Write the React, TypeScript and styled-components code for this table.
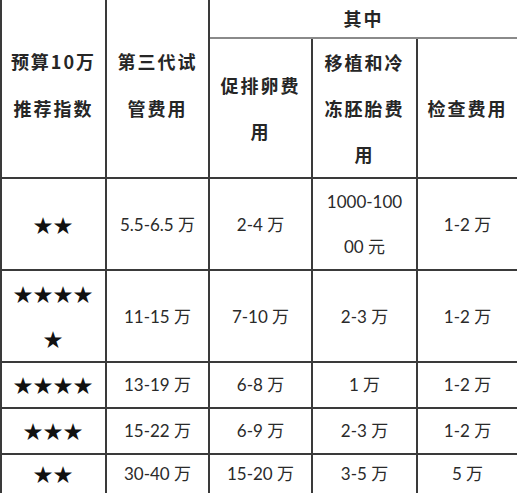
import * as React from "react";
import styled, { createGlobalStyle } from "styled-components";

interface CostRow {
  stars: string[];
  total: string[];
  ovulation: string[];
  transfer: string[];
  checkup: string[];
  lineHeight: number;
}

const rows: CostRow[] = [
  { stars: ["★★"], total: ["5.5-6.5 万"], ovulation: ["2-4 万"], transfer: ["1000-100", "00 元"], checkup: ["1-2 万"], lineHeight: 45 },
  { stars: ["★★★★", "★"], total: ["11-15 万"], ovulation: ["7-10 万"], transfer: ["2-3 万"], checkup: ["1-2 万"], lineHeight: 45 },
  { stars: ["★★★★"], total: ["13-19 万"], ovulation: ["6-8 万"], transfer: ["1 万"], checkup: ["1-2 万"], lineHeight: 44 },
  { stars: ["★★★"], total: ["15-22 万"], ovulation: ["6-9 万"], transfer: ["2-3 万"], checkup: ["1-2 万"], lineHeight: 44 },
  { stars: ["★★"], total: ["30-40 万"], ovulation: ["15-20 万"], transfer: ["3-5 万"], checkup: ["5 万"], lineHeight: 38 },
];

const GlobalStyle = createGlobalStyle`
  html, body {
    margin: 0;
    padding: 0;
    background: #ffffff;
  }
`;

const Sheet = styled.div`
  width: 530px;
  height: 500px;
  background: #ffffff;
  overflow: hidden;
`;

const Table = styled.table`
  border-collapse: collapse;
  table-layout: fixed;
  width: 516px;
  border-top: hidden;
  border-right: hidden;
  border-bottom: hidden;
  border-left: 2px solid #555555;
`;

const HeadCell = styled.th<{ $light?: boolean; $lift?: number }>`
  border: 2px solid ${p => (p.$light ? "#8a8a8a" : "#3a3a3a")};
  padding: 0 0 ${p => p.$lift ?? 0}px;
  text-align: center;
  vertical-align: middle;
  font-family: "Noto Sans CJK SC", sans-serif;
  font-size: 18px;
  font-weight: 700;
  letter-spacing: 2px;
  color: #262626;
`;

const Cell = styled.td`
  border: 2px solid #3a3a3a;
  padding: 0;
  text-align: center;
  vertical-align: middle;
  font-family: Lato, "Noto Sans CJK SC", sans-serif;
  font-size: 17px;
  color: #2a2a2a;
  white-space: nowrap;
`;

const Line = styled.div<{ $lh: number }>`
  height: ${p => p.$lh}px;
  line-height: ${p => p.$lh}px;
  overflow: hidden;
`;

const Stars = styled.div`
  font-family: "Noto Sans CJK SC", sans-serif;
  font-size: 19px;
  letter-spacing: 1px;
  color: #111111;
`;

const Lines: React.FC<{ lines: string[]; lh: number }> = ({ lines, lh }) => (
  <>
    {lines.map((l, i) => (
      <Line key={i} $lh={lh}>
        {l}
      </Line>
    ))}
  </>
);

export default function App() {
  return (
    <Sheet>
      <GlobalStyle />
      <Table>
        <colgroup>
          <col style={{ width: 105 }} />
          <col style={{ width: 103 }} />
          <col style={{ width: 103 }} />
          <col style={{ width: 105 }} />
          <col style={{ width: 100 }} />
        </colgroup>
        <thead>
          <tr>
            <HeadCell rowSpan={2} $lift={7}>
              <Lines lines={["预算10万", "推荐指数"]} lh={47} />
            </HeadCell>
            <HeadCell rowSpan={2} $lift={7}>
              <Lines lines={["第三代试", "管费用"]} lh={47} />
            </HeadCell>
            <HeadCell colSpan={3} $light>
              <Lines lines={["其中"]} lh={37} />
            </HeadCell>
          </tr>
          <tr>
            <HeadCell>
              <Lines lines={["促排卵费", "用"]} lh={46} />
            </HeadCell>
            <HeadCell>
              <Lines lines={["移植和冷", "冻胚胎费", "用"]} lh={46} />
            </HeadCell>
            <HeadCell>
              <Lines lines={["检查费用"]} lh={46} />
            </HeadCell>
          </tr>
        </thead>
        <tbody>
          {rows.map((r, i) => (
            <tr key={i}>
              <Cell>
                <Stars>
                  <Lines lines={r.stars} lh={r.lineHeight} />
                </Stars>
              </Cell>
              <Cell>
                <Lines lines={r.total} lh={r.lineHeight} />
              </Cell>
              <Cell>
                <Lines lines={r.ovulation} lh={r.lineHeight} />
              </Cell>
              <Cell>
                <Lines lines={r.transfer} lh={r.lineHeight} />
              </Cell>
              <Cell>
                <Lines lines={r.checkup} lh={r.lineHeight} />
              </Cell>
            </tr>
          ))}
        </tbody>
      </Table>
    </Sheet>
  );
}
